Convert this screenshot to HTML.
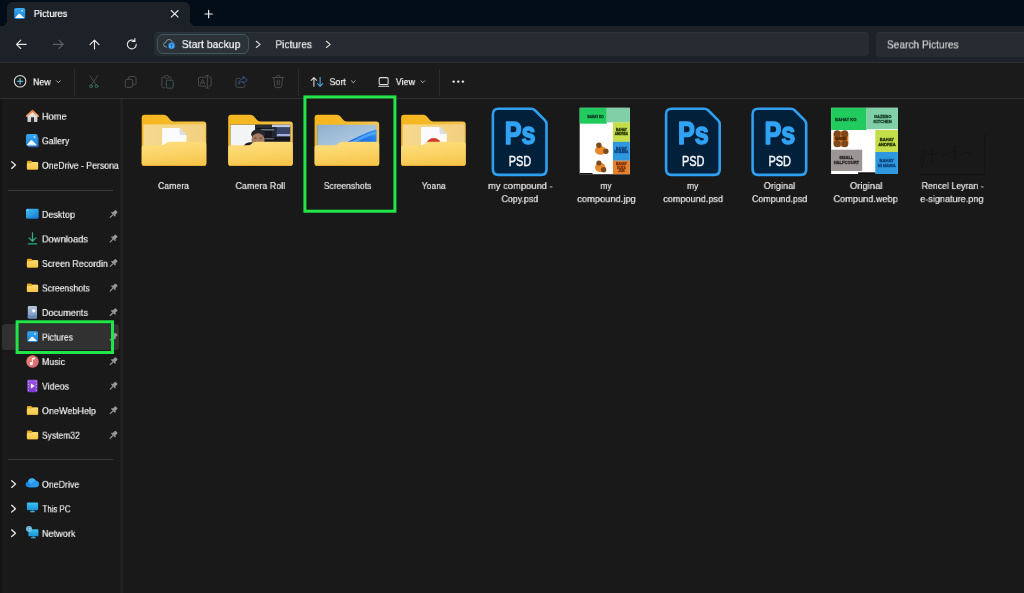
<!DOCTYPE html>
<html lang="en">
<head>
<meta charset="utf-8">
<title>Pictures</title>
<style>
*{box-sizing:border-box;margin:0;padding:0}
html,body{width:1024px;height:593px;overflow:hidden;background:#191919}
body{position:relative;font-family:"Liberation Sans",sans-serif;color:#e8e8e8}
.abs{position:absolute}
#titlebar{left:0;top:0;width:1024px;height:26px;background:#030d17}
#tab{left:7px;top:1.5px;width:183px;height:25px;background:#1c2227;border-radius:6px 6px 0 0}
#tabl{left:2px;top:21px;width:5px;height:5px;background:radial-gradient(circle at 0 0,#030d17 4.6px,#1c2227 5.2px)}
#tabr{left:190px;top:21px;width:5px;height:5px;background:radial-gradient(circle at 100% 0,#030d17 4.6px,#1c2227 5.2px)}
#navbar{left:0;top:26px;width:1024px;height:36px;background:#1c2227}
#addr{left:154.2px;top:32px;width:715.3px;height:24px;background:#262c31;border-radius:4px;border-top:1px solid #2b343c}
#search{left:876px;top:32px;width:160px;height:24.5px;background:#262c31;border-radius:4px;border-top:1px solid #2b343c}
#pill{left:156.5px;top:33.7px;width:92px;height:20.8px;background:#2b3339;border:1px solid #41585f;border-radius:6px}
#toolbar{left:0;top:61.5px;width:1024px;height:37.5px;background:#1b1b1b;border-top:1px solid #2a2e33;border-bottom:1px solid #303030}
.t{position:absolute;left:0;top:0;white-space:nowrap;line-height:16px;transform-origin:0 0;will-change:transform;text-shadow:0 0 0.5px currentColor}
.sep{position:absolute;width:1px;background:#2b2b2b}
#sidediv{left:120.4px;top:99px;width:2.7px;height:494px;background:linear-gradient(90deg,#1c1c1c,#222 40%,#222 60%,#1c1c1c)}
#ledge{left:0;top:99px;width:4px;height:494px;background:linear-gradient(90deg,#131313,#191919)}
.hr{position:absolute;height:1px;background:#393939}
#sel{left:2px;top:323.8px;width:117px;height:26.2px;background:#313131;border-radius:3px}
.gbox{position:absolute;border:2.6px solid #20e246;border-radius:1.5px;box-shadow:0 0 1.2px #0b8a2a,inset 0 0 1.2px #0b8a2a}
svg{position:absolute;left:0;top:0;overflow:visible;will-change:transform}
</style>
</head>
<body>
<div id="titlebar" class="abs"></div>
<div id="navbar" class="abs"></div>
<div id="tab" class="abs"></div>
<div id="tabl" class="abs"></div>
<div id="tabr" class="abs"></div>
<div id="addr" class="abs"></div>
<div id="search" class="abs"></div>
<div id="pill" class="abs"></div>
<div id="toolbar" class="abs"></div>
<div class="sep" style="left:73.5px;top:68.5px;height:27px"></div>
<div class="sep" style="left:297.5px;top:68.5px;height:27px"></div>
<div class="sep" style="left:439px;top:68.5px;height:27px"></div>
<div id="sidediv" class="abs"></div>
<div id="ledge" class="abs"></div>
<div class="hr" style="left:8px;top:190.3px;width:104.5px"></div>
<div class="hr" style="left:8px;top:459.2px;width:104.5px"></div>
<div id="sel" class="abs"></div>
<svg width="1024" height="593" viewBox="0 0 1024 593" font-family="'Liberation Sans',sans-serif">
<defs>
<linearGradient id="fBack" x1="0" y1="0" x2="1" y2="0.25"><stop offset="0" stop-color="#f6b61c"/><stop offset="0.45" stop-color="#f4b928"/><stop offset="1" stop-color="#f3c556"/></linearGradient>
<linearGradient id="fFront" x1="0" y1="0" x2="0.25" y2="1"><stop offset="0" stop-color="#ffdf80"/><stop offset="0.55" stop-color="#fbd467"/><stop offset="1" stop-color="#f6c74e"/></linearGradient>
<linearGradient id="fLine" x1="0" y1="0" x2="1" y2="0"><stop offset="0" stop-color="#f6d98e"/><stop offset="1" stop-color="#f2d080"/></linearGradient>
<linearGradient id="wall" x1="0" y1="0" x2="1" y2="1"><stop offset="0" stop-color="#8fb0cf"/><stop offset="0.6" stop-color="#a9c4dc"/><stop offset="1" stop-color="#b9d0e4"/></linearGradient>
<linearGradient id="swirl" x1="0" y1="1" x2="1" y2="0"><stop offset="0" stop-color="#1450c8"/><stop offset="0.6" stop-color="#1f78ea"/><stop offset="1" stop-color="#3f9af4"/></linearGradient>
<filter id="blr" x="-5%" y="-5%" width="110%" height="110%"><feGaussianBlur stdDeviation="0.45"/></filter>
<clipPath id="cThumb"><rect x="2.1" y="9.8" width="60" height="22.5"/></clipPath>
<g id="fback"><path d="M0 3 Q0 0 3 0 L22.3 0 Q24.3 0 25.6 1.5 L28.8 5.4 Q30 6.8 31.9 6.8 L61.6 6.8 Q64.6 6.8 64.6 9.8 L64.6 48.4 Q64.6 51.4 61.6 51.4 L3 51.4 Q0 51.4 0 48.4 Z" fill="url(#fBack)"/></g>
<g id="ffront"><path d="M0 33.2 Q0 30.6 2.6 30.6 L19.6 30.6 Q21.6 30.6 23.1 29.4 L24.9 28 Q26.3 27 28.3 27 L62 27 Q64.6 27 64.6 29.6 L64.6 48.4 Q64.6 51.4 61.6 51.4 L3 51.4 Q0 51.4 0 48.4 Z" fill="url(#fFront)"/><path d="M3 51.4 L61.6 51.4 Q64.6 51.4 64.6 48.4 L64.6 47.6 Q64.6 50.4 61.6 50.4 L3 50.4 Q0 50.4 0 47.6 L0 48.4 Q0 51.4 3 51.4 Z" fill="#e9ab2c"/></g>
<g id="paper"><path d="M0 1.2 Q0 0 1.2 0 L17.6 0 L24.4 6.8 L24.4 22 L0 22 Z" fill="#fbfbfd"/><path d="M17.6 0 L24.4 6.8 L19 6.8 Q17.6 6.8 17.6 5.4 Z" fill="#d9dde6"/></g>
<g id="psd"><path d="M6.6 1.2 L39.4 1.2 Q41.8 1.2 43.5 2.9 L53.1 12.5 Q54.8 14.2 54.8 16.6 L54.8 61.9 Q54.8 67.3 49.4 67.3 L6.6 67.3 Q1.2 67.3 1.2 61.9 L1.2 6.6 Q1.2 1.2 6.6 1.2 Z" fill="#03203a" stroke="#2f9ff0" stroke-width="2.6" stroke-linejoin="round"/>
<text x="28.4" y="36.65" font-size="30.6" font-weight="bold" fill="#31a3f5" stroke="#31a3f5" stroke-width="1.5" stroke-linejoin="round" text-anchor="middle" textLength="30.8" lengthAdjust="spacingAndGlyphs">Ps</text>
<text x="28.3" y="58.6" font-size="14.4" fill="#f4f6f8" stroke="#f4f6f8" stroke-width="0.45" text-anchor="middle" textLength="22.6" lengthAdjust="spacingAndGlyphs">PSD</text></g>
</defs>
<g transform="translate(141.7,114.7)"><use href="#fback"/><rect x="1.7" y="9.7" width="61.4" height="22" fill="url(#fLine)"/><use href="#paper" transform="translate(20.4,13.4)"/><use href="#ffront"/></g>
<g transform="translate(228.2,114.7)"><use href="#fback"/><g clip-path="url(#cThumb)"><g filter="url(#blr)"><rect x="0" y="8" width="64" height="26" fill="#15171a"/><rect x="2.1" y="9.8" width="24.8" height="22.5" fill="#f2f4f5"/><rect x="26.9" y="9.8" width="17" height="3.4" fill="#2b2f33"/><rect x="43.8" y="9.8" width="18.3" height="12.2" fill="#3a4468"/><rect x="43.8" y="9.8" width="18.3" height="2.6" fill="#c2cbe6"/><rect x="48.5" y="19.3" width="13.6" height="2.2" fill="#a4b0dc"/><rect x="43.8" y="12.4" width="4.6" height="9.4" fill="#23282f"/><rect x="32" y="14.4" width="14" height="1.4" fill="#6f7f86"/><rect x="36" y="23.4" width="10" height="1.2" fill="#5d6c70"/><ellipse cx="30" cy="19.6" rx="7" ry="5" fill="#26272a"/><ellipse cx="29.8" cy="25.2" rx="6.6" ry="6.6" fill="#a47a62"/><ellipse cx="27" cy="23.4" rx="1.5" ry="0.7" fill="#6a4836"/><ellipse cx="32.4" cy="23.4" rx="1.5" ry="0.7" fill="#6a4836"/><path d="M14.5 32.3 Q17 27.4 23.4 27.2 L24.4 32.3 Z" fill="#1c1d20"/></g></g><use href="#ffront"/></g>
<g transform="translate(314.6,114.7)"><use href="#fback"/><g clip-path="url(#cThumb)"><rect x="2.1" y="9.8" width="60" height="22.5" fill="url(#wall)"/><path d="M22 32.3 Q35 26.4 45 21.4 Q54 16.8 62.1 14.6 L62.1 32.3 Z" fill="url(#swirl)"/><path d="M30 30 Q40 25.4 48 21.4 Q55 18 62.1 16.6 L62.1 19.2 Q55 20.6 49 23.8 Q42 27.6 36 30.4 Z" fill="#5fb2f8" opacity=".7"/><rect x="2.1" y="9.8" width="1.2" height="22.5" fill="#7fa28a" opacity=".6"/></g><use href="#ffront"/></g>
<g transform="translate(401.1,114.7)"><use href="#fback"/><rect x="1.7" y="9.7" width="61.4" height="22" fill="url(#fLine)"/><use href="#paper" transform="translate(19.9,12.4) scale(1.06,1)"/><circle cx="32.6" cy="30.8" r="7.6" fill="#d13a28"/><circle cx="32.6" cy="31.4" r="4.2" fill="#fbfbfd"/><use href="#ffront"/></g>
<use href="#psd" transform="translate(491.7,107.6)"/>
<use href="#psd" transform="translate(664.9,107.6)"/>
<use href="#psd" transform="translate(751.4,107.6)"/>
<g font-weight="bold" text-anchor="middle" fill="#0c3a22"><rect x="579.7" y="107.8" width="50.1" height="66.4" fill="#ffffff"/><rect x="579.7" y="107.8" width="27.1" height="15.9" fill="#22cb5e"/><rect x="606.7" y="107.8" width="23.1" height="14.6" fill="#80cfa6"/><rect x="612.9" y="122.3" width="16.9" height="19.6" fill="#c3de4a"/><rect x="612.9" y="141.8" width="16.9" height="19" fill="#2e98df"/><rect x="612.9" y="160.7" width="16.9" height="13.5" fill="#e4832d"/><rect x="579.7" y="173" width="12.8" height="1.2" fill="#111"/><ellipse cx="600.4" cy="150.4" rx="5.4" ry="4.4" fill="#e8882a"/><circle cx="598.9" cy="145.3" r="2.7" fill="#7a4a1c"/><circle cx="605.9" cy="151.3" r="2.7" fill="#7a4a1c"/><ellipse cx="600.2" cy="167.4" rx="5.2" ry="4.6" fill="#e8882a"/><circle cx="598.9" cy="163" r="2.6" fill="#7a4a1c"/><circle cx="603.6" cy="169.8" r="2.7" fill="#7a4a1c"/><text stroke="#0c3a22" stroke-width="0.28" x="595.6" y="117.5" font-size="3.1">BAHAY KO</text><text stroke="#233006" stroke-width="0.28" x="621.4" y="130.6" font-size="3.1" fill="#233006">BAHAY</text><text stroke="#233006" stroke-width="0.28" x="621.4" y="134.5" font-size="3.1" fill="#233006">ANDREA</text><text stroke="#0d3f77" stroke-width="0.28" x="621.4" y="149.6" font-size="3.1" fill="#0d3f77">BAHAY</text><text stroke="#0d3f77" stroke-width="0.28" x="621.4" y="153.2" font-size="3.1" fill="#0d3f77">NI MAMA</text><text stroke="#7a2d08" stroke-width="0.28" x="621.4" y="165.4" font-size="3.1" fill="#7a2d08">BAHAY</text><text stroke="#7a2d08" stroke-width="0.28" x="621.4" y="168.6" font-size="3.1" fill="#7a2d08">KUYA</text><text stroke="#7a2d08" stroke-width="0.28" x="621.4" y="171.8" font-size="3.1" fill="#7a2d08">JON</text></g>
<g font-weight="bold" text-anchor="middle" fill="#0c3a22"><rect x="831.1" y="107.8" width="66.8" height="66.2" fill="#ffffff"/><rect x="831.1" y="107.8" width="35.5" height="22.2" fill="#22cb5e"/><rect x="866.5" y="107.8" width="31.4" height="21.4" fill="#80cfa6"/><rect x="875.3" y="130" width="22.6" height="22.1" fill="#c3de4a"/><rect x="875.3" y="152" width="22.6" height="22" fill="#2e98df"/><rect x="831.1" y="149.7" width="31.1" height="21.3" fill="#9b9595"/><rect x="858.1" y="172.3" width="17.2" height="1.7" fill="#111"/><rect x="833.4" y="131.2" width="15" height="15.4" rx="3" fill="#d67a2a"/><circle cx="837.2" cy="133.8" r="3.5" fill="#7c481c"/><circle cx="844.7" cy="133.8" r="3.5" fill="#7c481c"/><circle cx="837.2" cy="143.8" r="3.5" fill="#7c481c"/><circle cx="844.7" cy="143.8" r="3.5" fill="#7c481c"/><text stroke="#3c1d06" stroke-width="0.28" x="840.6" y="139.8" font-size="2.7" fill="#3c1d06">GARDEN</text><text stroke="#0c3a22" stroke-width="0.28" x="845.7" y="120.8" font-size="4.1">BAHAY KO</text><text stroke="#123a2a" stroke-width="0.28" x="882.7" y="118" font-size="4.1" fill="#123a2a">GAZEBO</text><text stroke="#123a2a" stroke-width="0.28" x="882.7" y="122.9" font-size="4.1" fill="#123a2a">KITCHEN</text><text stroke="#233006" stroke-width="0.28" x="886.9" y="140.8" font-size="4.1" fill="#233006">BAHAY</text><text stroke="#233006" stroke-width="0.28" x="886.9" y="145.8" font-size="4.1" fill="#233006">ANDREA</text><text stroke="#0d3f77" stroke-width="0.28" x="886.7" y="162.3" font-size="4.1" fill="#0d3f77">BAHAY</text><text stroke="#0d3f77" stroke-width="0.28" x="886.7" y="167.4" font-size="4.1" fill="#0d3f77">NI MAMA</text><text stroke="#2a2626" stroke-width="0.28" x="846.4" y="158.6" font-size="4.1" fill="#2a2626">SMALL</text><text stroke="#2a2626" stroke-width="0.28" x="846.4" y="163.6" font-size="4.1" fill="#2a2626">HALFCOURT</text></g>
<g fill="none" stroke="#0e0e0e" stroke-width="0.9" stroke-linecap="round" opacity=".9"><path d="M920.5 162 Q922 150 926 151 Q924 158 921.5 168 M928 154 L938 153.6 M932 149 L932 163 M941 156 Q945 152 948 155 M951 152 L957 151 M955 147 L955 158 M960 155 Q966 151 972 154"/><path d="M984 134 L986.5 142 M984.5 134.5 L984.5 171"/><path d="M920 174.6 L984 174.6" stroke-width="1.3"/></g>
<rect x="912" y="104" width="86" height="72" fill="#1b1b1b" opacity=".45"/>
</svg>
<svg width="1024" height="593" viewBox="0 0 1024 593">
<defs>
<linearGradient id="gPic" x1="0" y1="0" x2="0" y2="1"><stop offset="0" stop-color="#37a6ee"/><stop offset="1" stop-color="#1c86d6"/></linearGradient>
<linearGradient id="gDesk" x1="0" y1="0" x2="1" y2="1"><stop offset="0" stop-color="#3cc0f4"/><stop offset="1" stop-color="#1a78cc"/></linearGradient>
<linearGradient id="gDoc" x1="0" y1="0" x2="0" y2="1"><stop offset="0" stop-color="#b4c6da"/><stop offset="1" stop-color="#6f90ba"/></linearGradient>
<linearGradient id="gMus" x1="0" y1="0" x2="1" y2="1"><stop offset="0" stop-color="#ea8a66"/><stop offset="1" stop-color="#d8627e"/></linearGradient>
<linearGradient id="gVid" x1="0" y1="0" x2="0" y2="1"><stop offset="0" stop-color="#9a55e4"/><stop offset="1" stop-color="#7a3ccc"/></linearGradient>
<linearGradient id="gFoF" x1="0" y1="0" x2="0" y2="1"><stop offset="0" stop-color="#ffdc70"/><stop offset="1" stop-color="#f6c445"/></linearGradient>
<linearGradient id="gPC" x1="0" y1="0" x2="0" y2="1"><stop offset="0" stop-color="#36c4f0"/><stop offset="1" stop-color="#1d93d8"/></linearGradient>
<linearGradient id="gRoof" gradientUnits="userSpaceOnUse" x1="0" y1="0" x2="0" y2="7"><stop offset="0" stop-color="#e2702c"/><stop offset="1" stop-color="#f6b07c"/></linearGradient>
<linearGradient id="gWall" x1="0" y1="0" x2="0" y2="1"><stop offset="0" stop-color="#f4f4f4"/><stop offset="1" stop-color="#c6c6c8"/></linearGradient>
<g id="pin"><g transform="rotate(45)" fill="#969696"><rect x="-1.75" y="-4.9" width="3.5" height="4.2" rx="0.7"/><rect x="-2.9" y="-1.3" width="5.8" height="1.5" rx="0.6"/><rect x="-0.6" y="0" width="1.2" height="4.6" rx="0.5"/></g></g>
<g id="chev"><path d="M-1.9 -3.3 L1.9 0 L-1.9 3.3" fill="none" stroke="#e4e4e4" stroke-width="1.35" stroke-linecap="round" stroke-linejoin="round"/></g>
<g id="sfold"><path d="M0 1.3 Q0 0.3 1 0.3 L3.9 0.3 Q4.5 0.3 4.9 0.8 L5.7 1.7 L10.2 1.7 Q11.2 1.7 11.2 2.7 L11.2 8 Q11.2 9 10.2 9 L1 9 Q0 9 0 8 Z" fill="#e5a422"/><path d="M0 3.6 Q0 2.8 0.9 2.8 L3.9 2.8 Q4.6 2.8 5 2.4 L5.6 1.9 Q5.9 1.7 6.4 1.7 L10.2 1.7 Q11.2 1.7 11.2 2.7 L11.2 8 Q11.2 9 10.2 9 L1 9 Q0 9 0 8 Z" fill="url(#gFoF)"/></g>
<g id="picico"><rect x="0" y="0" width="11" height="11" rx="1.6" fill="url(#gPic)"/><circle cx="7.9" cy="2.9" r="1.0" fill="#a8e0ff"/><path d="M0.9 10.1 L4.3 6.0 Q5.1 5.2 5.9 6.0 L10.1 10.1 Z" fill="#ffffff"/></g>
</defs>
<use href="#picico" transform="translate(14.2,7.9)"/>
<path d="M171.3 10.5 L178.1 17.1 M178.1 10.5 L171.3 17.1" stroke="#e8e8e8" stroke-width="1.1" stroke-linecap="round"/>
<path d="M205 14 L212.3 14 M208.65 10.4 L208.65 17.7" stroke="#f0f0f0" stroke-width="1.2" stroke-linecap="round"/>
<g fill="none" stroke="#e6e6e6" stroke-width="1.15" stroke-linecap="round" stroke-linejoin="round">
<path d="M26.2 44.3 L16.6 44.3 M20.7 40.2 L16.5 44.3 L20.7 48.5"/>
<path d="M53.2 44.3 L63 44.3 M59 40.2 L63.2 44.3 L59 48.5" stroke="#59616a"/>
<path d="M94.5 49 L94.5 40.4 M90 44.6 L94.5 40.1 L99 44.6"/>
<path d="M136.2 44.4 A4.45 4.45 0 1 1 134.6 41 M134.9 38.6 L134.9 41.5 L132 41.5"/>
</g>
<path d="M166.4 47.2 Q163.7 47.2 163.7 44.8 Q163.7 42.7 165.8 42.4 Q166.2 39.5 169 39.5 Q171.3 39.5 172.1 41.6 Q172.7 41.7 173.2 42.1" fill="none" stroke="#879ba3" stroke-width="1" stroke-linecap="round"/>
<circle cx="171.6" cy="45.8" r="3.25" fill="#4ab0f6" stroke="#1e62ac" stroke-width="0.7"/><path d="M171.6 47.6 L171.6 44.3 M170.2 45.6 L171.6 44.1 L173 45.6" fill="none" stroke="#1f64bb" stroke-width="0.9" stroke-linecap="round" stroke-linejoin="round"/>
<path d="M256.3 41.3 L260.09999999999997 44.4 L256.3 47.5" fill="none" stroke="#d8d8d8" stroke-width="1.15" stroke-linecap="round" stroke-linejoin="round"/>
<path d="M326.40000000000003 41.3 L330.2 44.4 L326.40000000000003 47.5" fill="none" stroke="#d8d8d8" stroke-width="1.15" stroke-linecap="round" stroke-linejoin="round"/>
<circle cx="20.1" cy="81.2" r="5.75" fill="none" stroke="#dcdcdc" stroke-width="1.05"/><path d="M17.4 81.2 L22.8 81.2 M20.1 78.5 L20.1 83.9" stroke="#6fcdf0" stroke-width="1.1" stroke-linecap="round"/>
<path d="M56.45 80.8 L58.35 82.7 L60.25 80.8" fill="none" stroke="#bdbdbd" stroke-width="0.95" stroke-linecap="round" stroke-linejoin="round"/>
<path d="M351.40000000000003 80.8 L353.3 82.7 L355.2 80.8" fill="none" stroke="#bdbdbd" stroke-width="0.95" stroke-linecap="round" stroke-linejoin="round"/>
<path d="M420.90000000000003 80.8 L422.8 82.7 L424.7 80.8" fill="none" stroke="#bdbdbd" stroke-width="0.95" stroke-linecap="round" stroke-linejoin="round"/>
<g fill="none" stroke-linecap="round"><path d="M89.8 75.6 L96.3 85.2 M97.7 75.6 L91.2 85.2" stroke="#4b4b4b" stroke-width="1"/><circle cx="91" cy="86.2" r="1.45" stroke="#3c6f68" stroke-width="0.95"/><circle cx="96.5" cy="86.2" r="1.45" stroke="#3c6f68" stroke-width="0.95"/></g>
<g fill="none" stroke="#4b4b4b" stroke-width="1"><rect x="128.3" y="76.5" width="7.8" height="8.2" rx="1.6"/><rect x="125.3" y="79.3" width="7.4" height="8" rx="1.6" fill="#1b1b1b"/></g>
<g fill="none" stroke="#4b4b4b" stroke-width="1"><path d="M165 87.8 L163.3 87.8 Q161.9 87.8 161.9 86.4 L161.9 78.4 Q161.9 77.1 163.3 77.1 L169.6 77.1 Q171 77.1 171 78.4 L171 79.6"/><rect x="164.4" y="75.6" width="4.2" height="2.6" rx="1" fill="#1b1b1b"/><rect x="166.2" y="80.2" width="7" height="7.9" rx="1.3" stroke="#3f5a58"/></g>
<g fill="none" stroke="#4b4b4b" stroke-width="1" stroke-linecap="round"><path d="M205.6 86.2 L200.2 86.2 Q198.5 86.2 198.5 84.5 L198.5 78.9 Q198.5 77.2 200.2 77.2 L205.6 77.2 M209 77.2 L209.6 77.2 Q211.2 77.2 211.2 78.9 L211.2 84.5 Q211.2 86.2 209.6 86.2 L209 86.2"/><path d="M207.3 75.7 L207.3 87.8 M206 75.5 L208.6 75.5 M206 88 L208.6 88"/><path d="M200.6 84.3 L202.6 79.2 L204.6 84.3 M201.3 82.7 L203.9 82.7" stroke-width="0.9"/></g>
<g fill="none" stroke-linecap="round" stroke-linejoin="round"><path d="M240 78.3 L237.6 78.3 Q235.9 78.3 235.9 80 L235.9 85.6 Q235.9 87.3 237.6 87.3 L243.2 87.3 Q244.9 87.3 244.9 85.6 L244.9 84.6" stroke="#4b4b4b" stroke-width="1"/><path d="M243.3 76.4 L247.3 80 L243.3 83.5 L243.3 81.6 Q240 81.4 238.8 84.2 Q238.9 79 243.3 78.4 Z" fill="none" stroke="#34568c" stroke-width="0.95"/></g>
<g fill="none" stroke="#4b4b4b" stroke-width="1" stroke-linecap="round"><path d="M272.6 77.6 L283.8 77.6 M276 77.4 Q276 75.4 278.2 75.4 Q280.4 75.4 280.4 77.4 M273.8 77.8 L274.8 86.2 Q274.9 87.6 276.3 87.6 L280.1 87.6 Q281.5 87.6 281.6 86.2 L282.6 77.8 M277.2 80.3 L277.2 84.8 M279.2 80.3 L279.2 84.8"/></g>
<g fill="none" stroke-width="1.05" stroke-linecap="round" stroke-linejoin="round"><path d="M313.9 86.3 L313.9 77.6 M311.2 80.3 L313.9 77.5 L316.6 80.3" stroke="#e2e2e2"/><path d="M320.1 77.4 L320.1 86.2 M317.4 83.5 L320.1 86.3 L322.8 83.5" stroke="#4fb0ee"/></g>
<g fill="none" stroke="#e0e0e0" stroke-width="1.05" stroke-linecap="round"><rect x="379.2" y="77.6" width="8.9" height="6.9" rx="1.1"/><path d="M378.7 86.3 L388.6 86.3"/></g>
<circle cx="453.7" cy="81.6" r="1.2" fill="#ececec"/>
<circle cx="458.3" cy="81.6" r="1.2" fill="#ececec"/>
<circle cx="462.9" cy="81.6" r="1.2" fill="#ececec"/>
<g transform="translate(26.2,109.70)"><path d="M6.25 1.1 L11.2 5.9 L11.2 11.5 Q11.2 12.4 10.3 12.4 L2.2 12.4 Q1.3 12.4 1.3 11.5 L1.3 5.9 Z" fill="url(#gWall)"/><rect x="4.75" y="7.6" width="3.1" height="4.8" fill="#2b2b2d"/><path d="M0.75 6.3 L6.25 1.05 L11.75 6.3" fill="none" stroke="url(#gRoof)" stroke-width="1.9" stroke-linecap="round" stroke-linejoin="round"/></g>
<g transform="translate(26,134.04)"><rect x="1.8" y="2.6" width="10.9" height="10.6" rx="1.6" fill="#2b62b4"/><rect x="0" y="0" width="11.6" height="11.8" rx="1.7" fill="url(#gPic)"/><circle cx="8.4" cy="3.0" r="1.0" fill="#b4e4ff"/><path d="M0.8 10.9 L4.6 6.5 Q5.4 5.7 6.2 6.5 L10.8 10.9 Z" fill="#ffffff"/><path d="M1.2 11.4 L10.6 11.4 L9.3 10.1 L2.2 10.1 Z" fill="#cfe6fa"/></g>
<use href="#sfold" transform="translate(26.9,160.38)"/>
<use href="#sfold" transform="translate(26.9,258.54)"/>
<use href="#sfold" transform="translate(26.9,283.08)"/>
<use href="#sfold" transform="translate(26.9,405.78)"/>
<use href="#sfold" transform="translate(26.9,430.32)"/>
<g transform="translate(26,208.76)"><rect x="0" y="0" width="12.7" height="9.9" rx="1.3" fill="url(#gDesk)"/><path d="M0.6 9 L12.1 9 L12.1 9.2 Q12.1 9.9 11.4 9.9 L1.3 9.9 Q0.6 9.9 0.6 9.2 Z" fill="#1866b4"/><rect x="0.9" y="0.9" width="1.3" height="1.2" fill="#bfeaff" opacity=".8"/></g>
<g fill="none" stroke="#2fae86" stroke-width="1.25" stroke-linecap="round" stroke-linejoin="round"><path d="M32.5 232.90 L32.5 241.10 M29.1 237.90 L32.5 241.30 L35.9 237.90"/><path d="M28.4 243.90 L36.6 243.90" stroke="#27a890" stroke-width="1.4"/></g>
<g transform="translate(27.8,306.02)"><path d="M1.2 0 L7.9 0 Q9.2 0 9.2 1.3 L9.2 11.2 Q9.2 12.5 7.9 12.5 L1.2 12.5 Q0 12.5 0 11.2 L0 1.3 Q0 0 1.2 0 Z" fill="url(#gDoc)"/><rect x="4.4" y="3.3" width="3.2" height="3" rx="0.5" fill="#eef4fb"/><rect x="0" y="9.2" width="9.2" height="3.3" rx="1.1" fill="#6a8cb8"/></g>
<use href="#picico" transform="translate(27.2,331.16) scale(0.98)"/>
<g transform="translate(32.5,361.60)"><circle cx="0" cy="0" r="6.25" fill="url(#gMus)"/><path d="M-0.6 -3.4 L2.6 -4.1 L2.6 -2.5 L0.3 -2 L0.3 2.1 A1.55 1.55 0 1 1 -0.6 0.7 Z" fill="#fff"/></g>
<g transform="translate(27.3,379.64)"><rect x="0" y="0" width="10.2" height="12.6" rx="1.4" fill="url(#gVid)"/><path d="M3.6 3.8 L7.4 6.3 L3.6 8.8 Z" fill="#fff"/><g fill="#c9a2f2"><rect x="0.6" y="1.3" width="1.2" height="1.1"/><rect x="0.6" y="4.2" width="1.2" height="1.1"/><rect x="0.6" y="7.1" width="1.2" height="1.1"/><rect x="0.6" y="10" width="1.2" height="1.1"/><rect x="8.4" y="1.3" width="1.2" height="1.1"/><rect x="8.4" y="4.2" width="1.2" height="1.1"/><rect x="8.4" y="7.1" width="1.2" height="1.1"/><rect x="8.4" y="10" width="1.2" height="1.1"/></g></g>
<g transform="translate(25.6,478.00)"><path d="M3.3 9.2 Q0 9.2 0 6.3 Q0 3.9 2.4 3.5 Q3.3 0.3 6.6 0.3 Q9.3 0.3 10.3 2.8 Q13.2 3.1 13.2 6 Q13.2 9.2 10 9.2 Z" fill="#1c8ae4"/><path d="M2.4 3.5 Q3.3 0.3 6.6 0.3 Q9.3 0.3 10.3 2.8 Q8.8 2.9 7.9 3.9 L4.5 6 Q3.6 4 2.4 3.5 Z" fill="#3fb0f8"/><path d="M4.5 6 L7.9 3.9 Q9 2.8 10.3 2.8 Q13.2 3.1 13.2 6 Q13.2 9.2 10 9.2 L3.3 9.2 Q5.5 8.6 4.5 6 Z" fill="#2a9af0"/></g>
<g transform="translate(26.9,502.54)"><rect x="0" y="0" width="11.2" height="7.6" rx="0.9" fill="url(#gPC)"/><rect x="4.7" y="7.6" width="1.8" height="1.4" fill="#2a9fd6"/><rect x="3.1" y="8.8" width="5" height="0.9" rx="0.4" fill="#5bc4ea"/></g>
<g transform="translate(26.2,525.88)"><rect x="2.2" y="3.4" width="10" height="7" rx="0.9" fill="url(#gPC)"/><rect x="6.4" y="10.4" width="1.7" height="1.2" fill="#2a9fd6"/><rect x="4.7" y="11.4" width="5" height="0.9" rx="0.4" fill="#5bc4ea"/><circle cx="2.8" cy="2.9" r="2.9" fill="#8fd0ee"/><path d="M0.3 2.4 Q2.8 0.6 5.4 2.2 M0.5 4.2 Q2.8 3 5.2 4.4 M2.8 0.1 Q1.2 2.9 2.8 5.7" fill="none" stroke="#3a8fc0" stroke-width="0.5"/></g>
<use href="#chev" transform="translate(13.6,165.08)"/>
<use href="#chev" transform="translate(13.6,484.10)"/>
<use href="#chev" transform="translate(13.6,508.64)"/>
<use href="#chev" transform="translate(13.6,533.18)"/>
<use href="#pin" transform="translate(113.1,214.46)"/>
<use href="#pin" transform="translate(113.1,239.00)"/>
<use href="#pin" transform="translate(113.1,263.54)"/>
<use href="#pin" transform="translate(113.1,288.08)"/>
<use href="#pin" transform="translate(113.1,312.62)"/>
<use href="#pin" transform="translate(113.1,337.16)"/>
<use href="#pin" transform="translate(113.1,361.70)"/>
<use href="#pin" transform="translate(113.1,386.24)"/>
<use href="#pin" transform="translate(113.1,410.78)"/>
<use href="#pin" transform="translate(113.1,435.32)"/>
</svg>
<span class="t" style="font-size:10.3px;color:#ffffff;transform:translate(33.80px,7.27px) scale(0.9016,0.875)">Pictures</span>
<span class="t" style="font-size:11.8px;color:#f4f4f4;transform:translate(181.70px,36.10px) scale(0.8865,1.0)">Start backup</span>
<span class="t" style="font-size:11.8px;color:#ececec;transform:translate(275.40px,36.20px) scale(0.8568,1.0)">Pictures</span>
<span class="t" style="font-size:11.8px;color:#cfcfcf;transform:translate(886.90px,36.40px) scale(0.8624,1.0)">Search Pictures</span>
<span class="t" style="font-size:10.2px;color:#f0f0f0;transform:translate(33.00px,75.67px) scale(0.8705,0.875)">New</span>
<span class="t" style="font-size:10.2px;color:#f0f0f0;transform:translate(329.50px,75.58px) scale(0.8752,0.875)">Sort</span>
<span class="t" style="font-size:10.2px;color:#f0f0f0;transform:translate(395.80px,75.58px) scale(0.8829,0.875)">View</span>
<span class="t" style="font-size:10.2px;color:#e9e9e9;transform:translate(41.90px,110.08px) scale(0.9088,0.875)">Home</span>
<span class="t" style="font-size:10.2px;color:#e9e9e9;transform:translate(41.90px,134.62px) scale(0.8470,0.875)">Gallery</span>
<span class="t" style="font-size:10.2px;color:#e9e9e9;transform:translate(41.90px,159.16px) scale(0.8533,0.875)">OneDrive - Persona</span>
<span class="t" style="font-size:10.2px;color:#e9e9e9;transform:translate(41.90px,208.24px) scale(0.8845,0.875)">Desktop</span>
<span class="t" style="font-size:10.2px;color:#e9e9e9;transform:translate(41.90px,232.77px) scale(0.9144,0.875)">Downloads</span>
<span class="t" style="font-size:10.2px;color:#e9e9e9;transform:translate(41.90px,257.31px) scale(0.8689,0.875)">Screen Recordin</span>
<span class="t" style="font-size:10.2px;color:#e9e9e9;transform:translate(41.90px,281.86px) scale(0.8464,0.875)">Screenshots</span>
<span class="t" style="font-size:10.2px;color:#e9e9e9;transform:translate(41.90px,306.39px) scale(0.8944,0.875)">Documents</span>
<span class="t" style="font-size:10.2px;color:#e9e9e9;transform:translate(41.90px,330.94px) scale(0.8445,0.875)">Pictures</span>
<span class="t" style="font-size:10.2px;color:#e9e9e9;transform:translate(41.90px,355.47px) scale(0.8714,0.875)">Music</span>
<span class="t" style="font-size:10.2px;color:#e9e9e9;transform:translate(41.90px,380.01px) scale(0.8811,0.875)">Videos</span>
<span class="t" style="font-size:10.2px;color:#e9e9e9;transform:translate(41.90px,404.56px) scale(0.8866,0.875)">OneWebHelp</span>
<span class="t" style="font-size:10.2px;color:#e9e9e9;transform:translate(41.90px,429.09px) scale(0.8350,0.875)">System32</span>
<span class="t" style="font-size:10.2px;color:#e9e9e9;transform:translate(41.90px,478.17px) scale(0.8694,0.875)">OneDrive</span>
<span class="t" style="font-size:10.2px;color:#e9e9e9;transform:translate(42.50px,502.71px) scale(0.7736,0.875)">This PC</span>
<span class="t" style="font-size:10.2px;color:#e9e9e9;transform:translate(41.90px,527.25px) scale(0.8976,0.875)">Network</span>
<span class="t" style="font-size:10.2px;color:#e2e2e2;transform:translate(158.00px,179.47px) scale(0.8546,0.875)">Camera</span>
<span class="t" style="font-size:10.2px;color:#e2e2e2;transform:translate(235.50px,179.47px) scale(0.8784,0.875)">Camera Roll</span>
<span class="t" style="font-size:10.2px;color:#e2e2e2;transform:translate(323.75px,179.47px) scale(0.8402,0.875)">Screenshots</span>
<span class="t" style="font-size:10.2px;color:#e2e2e2;transform:translate(421.75px,179.47px) scale(0.8404,0.875)">Yoana</span>
<span class="t" style="font-size:10.2px;color:#e2e2e2;transform:translate(488.00px,179.47px) scale(0.9203,0.875)">my compound -</span>
<span class="t" style="font-size:10.2px;color:#e2e2e2;transform:translate(501.50px,192.57px) scale(0.8682,0.875)">Copy.psd</span>
<span class="t" style="font-size:10.2px;color:#e2e2e2;transform:translate(600.50px,179.47px) scale(0.8111,0.875)">my</span>
<span class="t" style="font-size:10.2px;color:#e2e2e2;transform:translate(577.25px,192.57px) scale(0.9132,0.875)">compound.jpg</span>
<span class="t" style="font-size:10.2px;color:#e2e2e2;transform:translate(687.00px,179.47px) scale(0.8284,0.875)">my</span>
<span class="t" style="font-size:10.2px;color:#e2e2e2;transform:translate(663.25px,192.57px) scale(0.8933,0.875)">compound.psd</span>
<span class="t" style="font-size:10.2px;color:#e2e2e2;transform:translate(763.75px,179.47px) scale(0.8969,0.875)">Original</span>
<span class="t" style="font-size:10.2px;color:#e2e2e2;transform:translate(752.00px,192.57px) scale(0.8704,0.875)">Compund.psd</span>
<span class="t" style="font-size:10.2px;color:#e2e2e2;transform:translate(849.90px,179.47px) scale(0.9271,0.875)">Original</span>
<span class="t" style="font-size:10.2px;color:#e2e2e2;transform:translate(833.50px,192.57px) scale(0.9011,0.875)">Compund.webp</span>
<span class="t" style="font-size:10.2px;color:#e2e2e2;transform:translate(921.60px,179.47px) scale(0.8627,0.875)">Rencel Leyran -</span>
<span class="t" style="font-size:10.2px;color:#e2e2e2;transform:translate(920.20px,192.57px) scale(0.8927,0.875)">e-signature.png</span>
<svg width="1024" height="593" viewBox="0 0 1024 593"><defs><filter id="gb" x="-5%" y="-5%" width="110%" height="110%"><feGaussianBlur stdDeviation="0.4"/></filter></defs>
<g fill="none" stroke="#21e649" stroke-width="3" filter="url(#gb)"><rect x="17.1" y="321.8" width="95.4" height="30.7"/><rect x="304.9" y="96.9" width="90" height="114.3"/></g></svg>
</body>
</html>
